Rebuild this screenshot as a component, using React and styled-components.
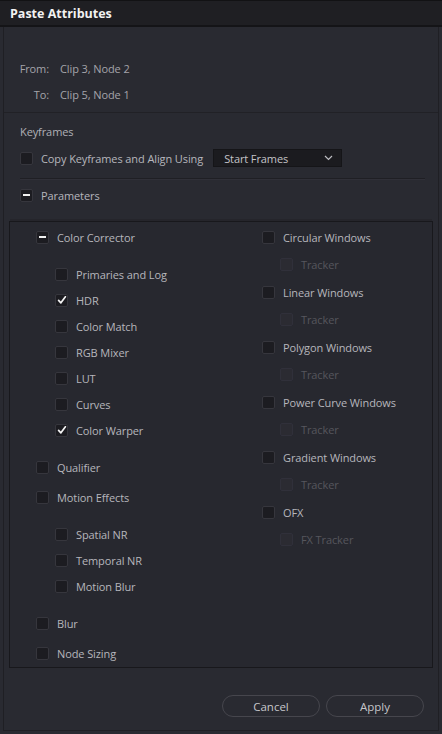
import React from "react";
import styled, { createGlobalStyle } from "styled-components";

const GlobalStyle = createGlobalStyle`
  html, body {
    margin: 0;
    padding: 0;
    background: #24242a;
  }
  * { box-sizing: border-box; }
`;

const Window = styled.div`
  width: 442px;
  height: 734px;
  display: flex;
  flex-direction: column;
  background: #292a31;
  font-family: "Open Sans", "Noto Sans", sans-serif;
  font-size: 11px;
  letter-spacing: -0.1px;
  color: #b4b4ba;
  overflow: hidden;
`;

const TitleBar = styled.div`
  height: 27px;
  flex: none;
  display: flex;
  align-items: center;
  padding: 0 10px;
  background: #1f1f23;
  border-top: 1px solid #121214;
  border-bottom: 2px solid #141417;
  color: #f2f2f2;
  font-weight: 700;
  font-size: 12.5px;
  letter-spacing: 0;
`;

const Body = styled.div`
  flex: 1;
  display: flex;
  flex-direction: column;
  margin: 0 3px 3px;
  border-left: 1px solid #1f1f24;
  border-right: 1px solid #1f1f24;
  border-bottom: 1px solid #1f1f24;
`;

const Route = styled.div`
  display: grid;
  grid-template-columns: 45px 1fr;
  grid-auto-rows: 26px;
  column-gap: 11px;
  align-items: center;
  padding: 28px 0 5px;
  border-bottom: 1px solid #212126;
  color: #a4a4aa;
`;

const RouteLabel = styled.span`
  text-align: right;
`;

const Section = styled.div`
  padding: 6px 13px 0 16px;
  display: flex;
  flex-direction: column;
`;

const Heading = styled.div`
  height: 24px;
  display: flex;
  align-items: center;
  color: #b0b0b6;
`;

const Row = styled.div`
  height: ${(p) => p.$h || 26}px;
  display: flex;
  align-items: center;
  gap: 8px;
  padding-left: ${(p) => p.$indent || 0}px;
  color: ${(p) => (p.$disabled ? "#56565d" : "#b6b6bc")};
  white-space: nowrap;
`;

const Box = styled.span`
  width: 13px;
  height: 13px;
  flex: none;
  display: inline-flex;
  align-items: center;
  justify-content: center;
  border-radius: 2px;
  background: ${(p) => (p.$disabled ? "#2b2b32" : "#1c1c21")};
  border: 1px solid ${(p) => (p.$disabled ? "#30303a" : "#36363d")};
`;

const Dash = styled.span`
  width: 7px;
  height: 2px;
  background: #f0f0f0;
`;

const Select = styled.div`
  margin-left: 2px;
  width: 129px;
  height: 18px;
  display: flex;
  align-items: center;
  justify-content: space-between;
  padding: 0 8px 0 10px;
  background: #1b1b1f;
  border: 1px solid #151518;
  color: #c4c4c8;
`;

const Rule = styled.div`
  height: 1px;
  background: #1f1f24;
  margin: 5px 0 3px;
  box-shadow: 0 1px 0 #303038;
`;

const Panel = styled.div`
  margin: 13px 5px 0 5px;
  height: 447px;
  border: 1px solid #18181c;
  box-shadow: 0 -3px 0 -1px #25252b;
  background: #27282f;
  display: grid;
  grid-template-columns: 226px 1fr;
  padding: 0 0 0 26px;
`;

const Column = styled.div`
  display: flex;
  flex-direction: column;
  padding-top: ${(p) => p.$top || 0}px;
`;

const SubList = styled.div`
  display: flex;
  flex-direction: column;
  padding: 9px 0 9px 19px;
`;

const Group = styled.div`
  display: flex;
  flex-direction: column;
  margin-bottom: 2px;
`;

const Footer = styled.div`
  flex: 1;
  display: flex;
  justify-content: flex-end;
  align-items: flex-start;
  gap: 6px;
  padding: 27px 14px 0 0;
`;

const Button = styled.button`
  width: 98px;
  height: 22px;
  border-radius: 11px;
  border: 1px solid #46464d;
  background: transparent;
  color: #c6c6ca;
  font-family: inherit;
  font-size: 11.5px;
  padding: 0;
`;

function Check({ checked, dash, disabled }) {
  return (
    <Box $disabled={disabled}>
      {checked && (
        <svg width="10" height="10" viewBox="0 0 10 10">
          <path d="M1.6 5.4 L3.9 7.8 L8.4 1.8" fill="none" stroke="#f4f4f4" strokeWidth="1.7" strokeLinecap="round" strokeLinejoin="round" />
        </svg>
      )}
      {dash && <Dash />}
    </Box>
  );
}

function Item({ label, checked, dash, disabled, h, indent }) {
  return (
    <Row $h={h} $indent={indent} $disabled={disabled}>
      <Check checked={checked} dash={dash} disabled={disabled} />
      <span>{label}</span>
    </Row>
  );
}

const corrector = [
  ["Primaries and Log", false],
  ["HDR", true],
  ["Color Match", false],
  ["RGB Mixer", false],
  ["LUT", false],
  ["Curves", false],
  ["Color Warper", true],
];

const motion = ["Spatial NR", "Temporal NR", "Motion Blur"];

const windows = [
  ["Circular Windows", "Tracker"],
  ["Linear Windows", "Tracker"],
  ["Polygon Windows", "Tracker"],
  ["Power Curve Windows", "Tracker"],
  ["Gradient Windows", "Tracker"],
  ["OFX", "FX Tracker"],
];

export default function App() {
  return (
    <>
      <GlobalStyle />
      <Window>
        <TitleBar>Paste Attributes</TitleBar>
        <Body>
          <Route>
            <RouteLabel>From:</RouteLabel>
            <span>Clip 3, Node 2</span>
            <RouteLabel>To:</RouteLabel>
            <span>Clip 5, Node 1</span>
          </Route>

          <Section>
            <Heading>Keyframes</Heading>
            <Row $h={30}>
              <Check />
              <span>Copy Keyframes and Align Using</span>
              <Select>
                <span>Start Frames</span>
                <svg width="9" height="6" viewBox="0 0 9 6">
                  <path d="M1 1 L4.5 4.5 L8 1" fill="none" stroke="#bdbdc2" strokeWidth="1.2" />
                </svg>
              </Select>
            </Row>
            <Rule />
            <Item label="Parameters" dash />
          </Section>

          <Panel>
            <Column>
              <Item label="Color Corrector" dash h={30} />
              <SubList>
                {corrector.map(([label, on]) => (
                  <Item key={label} label={label} checked={on} />
                ))}
              </SubList>
              <Item label="Qualifier" h={30} />
              <Item label="Motion Effects" h={30} />
              <SubList>
                {motion.map((label) => (
                  <Item key={label} label={label} />
                ))}
              </SubList>
              <Item label="Blur" h={30} />
              <Item label="Node Sizing" h={30} />
            </Column>
            <Column $top={2}>
              {windows.map(([label, sub]) => (
                <Group key={label}>
                  <Item label={label} h={27} />
                  <Item label={sub} disabled indent={18} />
                </Group>
              ))}
            </Column>
          </Panel>

          <Footer>
            <Button>Cancel</Button>
            <Button>Apply</Button>
          </Footer>
        </Body>
      </Window>
    </>
  );
}
